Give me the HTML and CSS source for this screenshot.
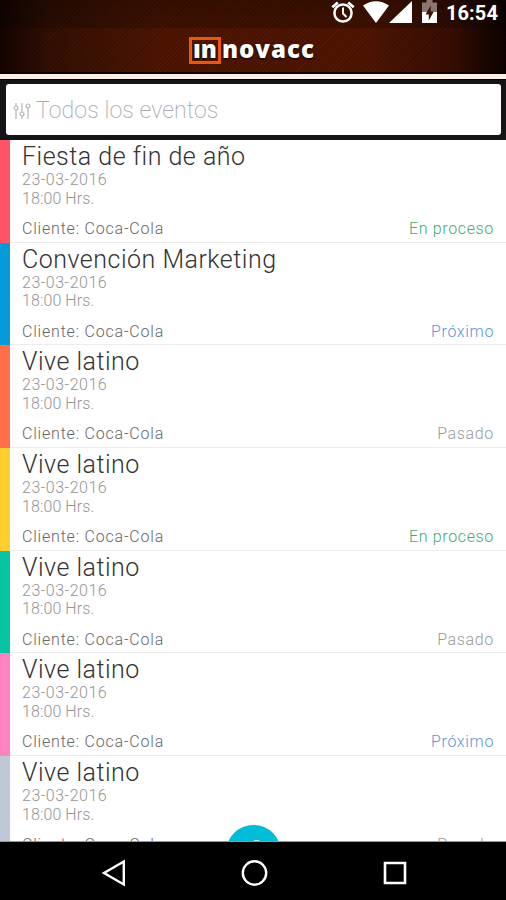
FILE: index.html
```html
<!DOCTYPE html>
<html lang="es">
<head>
	<meta charset="utf-8">
	<title>Innovacc</title>
	<link rel="stylesheet" href="styles.css">
</head>
<body>
	<header>
		<div class="status">
			<svg class="alarm" width="24" height="24" viewBox="0 0 24 24" fill="none" stroke="#fff">
				<circle cx="12" cy="13" r="8.6" stroke-width="2.5"/>
				<path d="M12 7.5v6l3.5 3.5" stroke-width="2"/>
				<path d="M1.3 7.2L6.8 2.4M22.7 7.2l-5.5-4.8" stroke-width="2.6"/>
			</svg>
			<svg class="wifi" width="26" height="24" viewBox="0 0 26 24" fill="#fff">
				<path d="M0 5.500Q13 -3 26 5.500L13 23z"/>
			</svg>
			<svg class="signal" width="23" height="24" viewBox="0 0 23 24" fill="#fff">
				<path d="M23 1v22H0z"/>
			</svg>
			<svg class="battery" width="15" height="24" viewBox="0 0 15 24">
				<path d="M4.500 0h6v2.500H15V12H0V2.500h4.500z" fill="#8b7770"/>
				<path d="M0 12h15v11H0z" fill="#fff"/>
				<path d="M8.700 5.500L3.500 14.500h3.300v6l5-9H8.700z" fill="#3a1206"/>
			</svg>
			<span class="clock">16:54</span>
		</div>
		<h1><span class="boxed">ın</span><span class="rest">novacc</span></h1>
	</header>
	<div class="stripe"></div>
	<div class="search">
		<div class="field">
			<svg width="18" height="18" viewBox="0 0 18 18" fill="none" stroke="#b3b5b8" stroke-width="1.2">
				<path d="M3 1v3M3 8v9M9 1v9M9 14v3M15 6v11"/>
				<circle cx="3" cy="6" r="2"/>
				<circle cx="9" cy="12" r="2"/>
				<circle cx="15" cy="4" r="2"/>
			</svg>
			<span>Todos los eventos</span>
		</div>
	</div>
	<main>
		<div class="event red">
			<h2>Fiesta de fin de año</h2>
			<p>23-03-2016</p>
			<p class="time">18:00 Hrs.</p>
			<div class="info"><span>Cliente: Coca-Cola</span><span class="proceso">En proceso</span></div>
		</div>
		<div class="event blue">
			<h2>Convención Marketing</h2>
			<p>23-03-2016</p>
			<p class="time">18:00 Hrs.</p>
			<div class="info"><span>Cliente: Coca-Cola</span><span class="proximo">Próximo</span></div>
		</div>
		<div class="event orange">
			<h2>Vive latino</h2>
			<p>23-03-2016</p>
			<p class="time">18:00 Hrs.</p>
			<div class="info"><span>Cliente: Coca-Cola</span><span class="pasado">Pasado</span></div>
		</div>
		<div class="event yellow">
			<h2>Vive latino</h2>
			<p>23-03-2016</p>
			<p class="time">18:00 Hrs.</p>
			<div class="info"><span>Cliente: Coca-Cola</span><span class="proceso">En proceso</span></div>
		</div>
		<div class="event green">
			<h2>Vive latino</h2>
			<p>23-03-2016</p>
			<p class="time">18:00 Hrs.</p>
			<div class="info"><span>Cliente: Coca-Cola</span><span class="pasado">Pasado</span></div>
		</div>
		<div class="event pink">
			<h2>Vive latino</h2>
			<p>23-03-2016</p>
			<p class="time">18:00 Hrs.</p>
			<div class="info"><span>Cliente: Coca-Cola</span><span class="proximo">Próximo</span></div>
		</div>
		<div class="event gray">
			<h2>Vive latino</h2>
			<p>23-03-2016</p>
			<p class="time">18:00 Hrs.</p>
			<div class="info"><span>Cliente: Coca-Cola</span><span class="pasado">Pasado</span></div>
		</div>
		<div class="add">
			<svg width="55" height="55" viewBox="0 0 55 55" fill="none" stroke="#d5f3f7" stroke-width="2">
				<path d="M28 16h4l2 1h5"/>
			</svg>
		</div>
	</main>
	<nav>
		<svg width="26" height="28" viewBox="0 0 26 28" fill="none" stroke="#fff" stroke-width="2.400">
			<path d="M22.800 2.500v23L3 14z"/>
		</svg>
		<svg width="28" height="28" viewBox="0 0 28 28" fill="none" stroke="#fff" stroke-width="2.400">
			<circle cx="13.500" cy="14" r="11.700"/>
		</svg>
		<svg width="24" height="24" viewBox="0 0 24 24" fill="none" stroke="#fff" stroke-width="2.600">
			<path d="M2 2h20v20H2z"/>
		</svg>
	</nav>
</body>
</html>
```

FILE: styles.css
```css
* {
	box-sizing: border-box;
}
body {
	margin: 0;
	height: 900px;
	display: flex;
	flex-direction: column;
	overflow: hidden;
	background-color: #fff;
	font-family: Roboto, sans-serif;
	font-weight: 300;
}
header {
	height: 74px;
	flex: none;
	border-bottom: 2px solid #0c0200;
	background:
		repeating-linear-gradient(135deg, rgba(0, 0, 0, 0.16) 0, rgba(0, 0, 0, 0.16) 1.5px, transparent 1.5px, transparent 3px),
		linear-gradient(rgba(0, 0, 0, 0.3) 0, rgba(0, 0, 0, 0.2) 28px, transparent 29px),
		linear-gradient(90deg, #160400 0, #351003 50px, #521602 160px, #521602 370px, #3a0e02 450px, #0c0200 506px);
}
.status {
	height: 28px;
	display: flex;
	align-items: flex-start;
	padding-right: 8px;
	justify-content: flex-end;
}
.wifi {
	margin-left: 8px;
}
.battery {
	margin-left: 10px;
}
.clock {
	margin-left: 9px;
	color: #fff;
	font-size: 20px;
	font-weight: 700;
	line-height: 26px;
	letter-spacing: 0.1px;
}
h1 {
	margin: 0;
	padding: 9px 0 0 189px;
	display: flex;
	color: #fff;
	font-family: "Open Sans", sans-serif;
	font-size: 24px;
	font-weight: 800;
	line-height: 18px;
	text-shadow: 0 1px 2px #000;
}
.boxed {
	width: 32px;
	height: 27px;
	border: 3px solid #e8590f;
	text-align: center;
}
.rest {
	margin-left: 1px;
	padding-top: 3px;
	letter-spacing: 1px;
}
.stripe {
	height: 5px;
	flex: none;
	background-color: #fbeee4;
}
.search {
	height: 61px;
	flex: none;
	padding: 4px 5px 6px 6px;
	border-top: 1px solid #000;
	background-color: #161314;
}
.field {
	height: 51px;
	display: flex;
	align-items: center;
	padding: 2px 0 0 7px;
	border-radius: 3px;
	background-color: #fff;
	color: #a9aaad;
	font-size: 23px;
	font-weight: 200;
	letter-spacing: 0.1px;
}
.field span {
	margin-left: 5px;
}
main {
	position: relative;
	height: 702px;
	flex: none;
	overflow: hidden;
	border-bottom: 1px solid #999;
}
.event {
	height: 102.7px;
	padding: 3px 12px 0 12px;
	border-left: 10px solid #ccc;
	box-shadow: inset 0 -1px #ececec;
}
.event h2 {
	margin: 0;
	color: #333;
	font-size: 25px;
	font-weight: 300;
	line-height: 28px;
	letter-spacing: 0.5px;
}
.event p {
	margin: 0;
	color: #949494;
	font-size: 16px;
	line-height: 18.5px;
	letter-spacing: 0.5px;
}
.event .time {
	letter-spacing: 0.1px;
}
.info {
	display: flex;
	justify-content: space-between;
	margin-top: 11px;
	color: #666;
	font-size: 16px;
	line-height: 19px;
	letter-spacing: 0.8px;
}
.info span + span {
	letter-spacing: 0.65px;
}
.red {
	border-left-color: #ff5367;
}
.blue {
	border-left-color: #069bd8;
}
.orange {
	border-left-color: #ff7048;
}
.yellow {
	border-left-color: #ffce2f;
}
.green {
	border-left-color: #08c3a3;
}
.pink {
	border-left-color: #ff83be;
}
.gray {
	border-left-color: #c0c7d5;
}
.proceso {
	color: #3fa872;
}
.proximo {
	color: #5b93e0;
}
.pasado {
	color: #999;
}
.add {
	position: absolute;
	left: 226px;
	top: 685px;
	width: 55px;
	height: 55px;
	border-radius: 50%;
	background-color: #00bcd4;
}
nav {
	height: 58px;
	flex: none;
	display: flex;
	align-items: center;
	padding: 4px 0 0 101px;
	background-color: #000;
}
nav svg + svg {
	margin-left: 114px;
}
```
